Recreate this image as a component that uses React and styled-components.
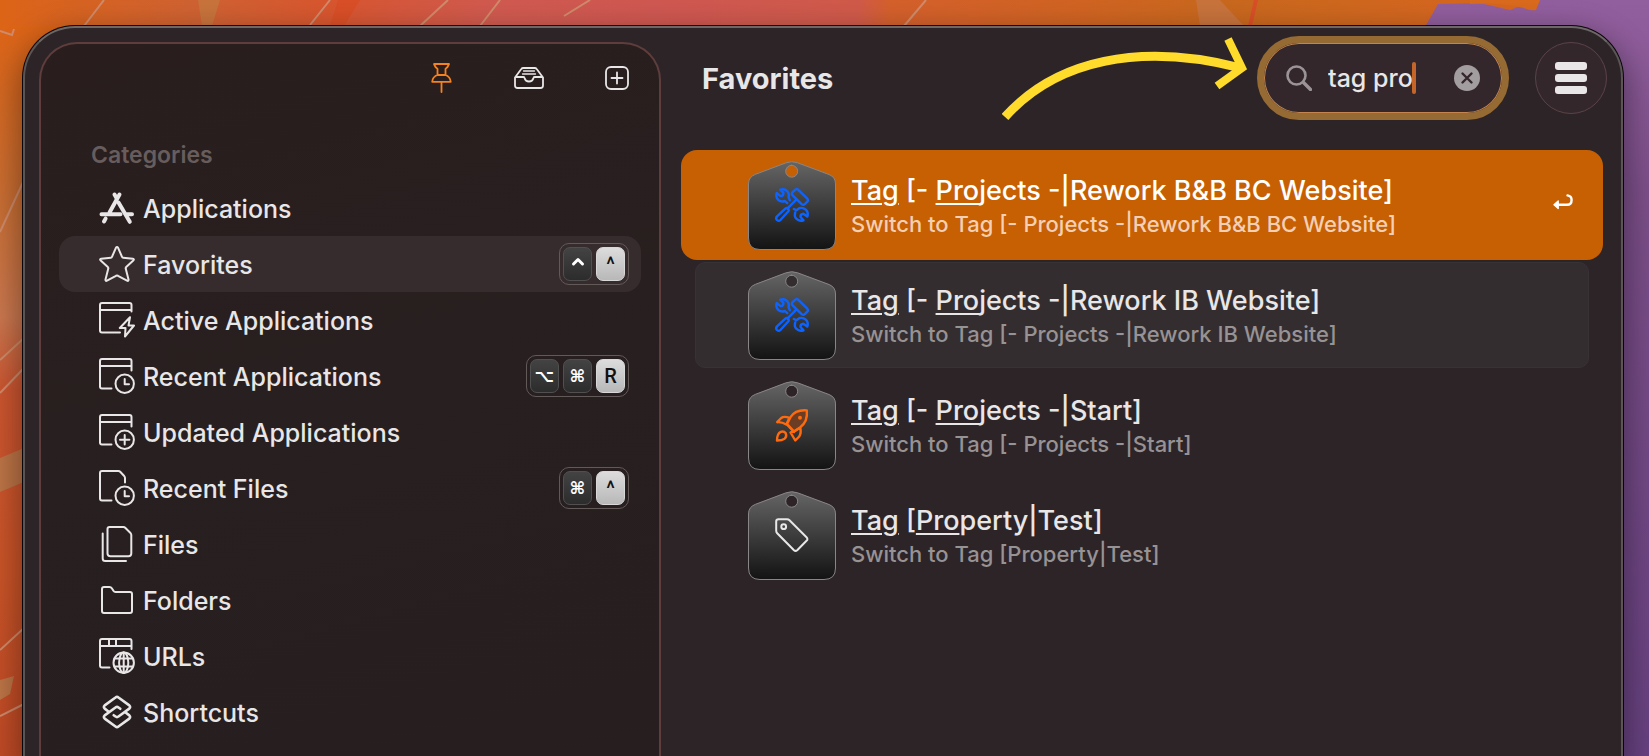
import React from "react";
import styled, { createGlobalStyle, css } from "styled-components";

const GlobalStyle = createGlobalStyle`
  *, *::before, *::after {
    box-sizing: border-box;
  }
  body {
    margin: 0;
    background: #2d2428;
    color: #e8e6e7;
    font-family: Inter, "Liberation Sans", sans-serif;
    font-size: 26px;
    font-weight: 500;
  }
  button, input {
    margin: 0;
    padding: 0;
    border: 0;
    background: none;
    color: inherit;
    font: inherit;
  }
`;

const Desktop = styled.div`
  position: relative;
  min-height: 100vh;
  padding: 26px 26px 0 23px;
  overflow: hidden;
`;

const WallpaperSvg = styled.svg`
  position: absolute;
  inset: 0;
  width: 100%;
  height: 100%;
`;

const AppWindow = styled.div`
  position: relative;
  display: flex;
  min-height: calc(100vh - 26px);
  border: 2px solid #5b5556;
  border-top-color: #6d6768;
  border-bottom: 0;
  border-radius: 52px 52px 0 0;
  background: #2d2428;
  box-shadow: 0 0 0 1px #080606, 0 12px 30px 6px rgba(0, 0, 0, 0.35);
`;

const Sidebar = styled.aside`
  flex: 0 0 622px;
  margin: 14px 0 0 14px;
  padding: 0 18px;
  border: 2px solid #5f3d3c;
  border-bottom: 0;
  border-radius: 38px 38px 0 0;
  background: linear-gradient(165deg, #291e1d 0%, #281f20 45%, #261e1f 100%);
`;

const Toolbar = styled.div`
  display: flex;
  align-items: center;
  justify-content: flex-end;
  gap: 56px;
  height: 68px;
  padding-right: 8px;
`;

const ToolButton = styled.button`
  display: flex;
  align-items: center;
  justify-content: center;
  width: 32px;
  height: 32px;
  color: ${(props) => (props.$active ? "#f58220" : "#e8e6e7")};
`;

const SectionTitle = styled.h2`
  margin: 28px 0 10px 32px;
  color: #675d5d;
  font-size: 23px;
  font-weight: 600;
  line-height: 30px;
`;

const CategoryList = styled.ul`
  margin: 0;
  padding: 0;
  list-style: none;
`;

const CategoryRow = styled.button`
  display: flex;
  align-items: center;
  gap: 8px;
  width: 100%;
  height: 56px;
  padding: 0 12px 0 40px;
  border-radius: 16px;
  background: ${(props) => (props.$selected ? "#372c2d" : "transparent")};
  font-size: 25px;
  text-align: left;
`;

const CategoryName = styled.span`
  flex: 1;
  padding-top: 2px;
`;

const Shortcut = styled.span`
  display: flex;
  gap: 4px;
  padding: 3px;
  border: 1px solid #625959;
  border-radius: 10px;
`;

const Key = styled.kbd`
  display: flex;
  align-items: center;
  justify-content: center;
  width: 29px;
  height: 34px;
  border: 1px solid #505050;
  border-radius: 7px;
  background: linear-gradient(#434343, #2c2c2c);
  color: #ffffff;
  font-family: "DejaVu Sans", sans-serif;
  font-size: 17px;
  font-weight: 700;
  ${(props) =>
    props.$light &&
    css`
      border-color: #d8d8d8;
      background: linear-gradient(#dcdcdc, #b8b8b8);
      color: #111111;
      font-family: Roboto, sans-serif;
      font-size: 20px;
      font-weight: 500;
    `}
`;

const Main = styled.main`
  flex: 1;
  min-width: 0;
  padding: 8px 14px 0 20px;
`;

const Header = styled.header`
  display: flex;
  align-items: center;
  height: 84px;
  padding-left: 21px;
`;

const Title = styled.h1`
  margin: 0 auto 0 0;
  font-size: 29px;
  font-weight: 700;
`;

const Arrow = styled.svg`
  flex: none;
  margin-right: 7px;
`;

const SearchBox = styled.label`
  display: flex;
  align-items: center;
  width: 252px;
  height: 84px;
  padding: 0 22px;
  border: 7px solid #966a33;
  border-radius: 42px;
  background: #33272b;
  box-shadow: inset 0 0 0 1px #c4844e;
`;

const SearchInput = styled.input`
  width: 84px;
  margin-left: 16px;
  outline: none;
  font-size: 25px;
  caret-color: transparent;
`;

const Caret = styled.span`
  width: 4px;
  height: 32px;
  border-radius: 2px;
  background: #c4662a;
`;

const ClearButton = styled.button`
  width: 26px;
  height: 26px;
  margin-left: auto;
  border-radius: 50%;
  background: #a29d9f;
  color: #33272b;
`;

const MenuButton = styled.button`
  display: flex;
  flex-direction: column;
  align-items: center;
  justify-content: center;
  gap: 4px;
  width: 72px;
  height: 72px;
  margin-left: 26px;
  border: 1px solid #5b4348;
  border-radius: 50%;
  background: #33272b;
`;

const MenuBar = styled.span`
  width: 32px;
  height: 8px;
  border-radius: 3px;
  background: #e8e6e7;
`;

const Results = styled.ul`
  margin: 30px 4px 0 0;
  padding: 0;
  list-style: none;
`;

const ResultRow = styled.button`
  display: flex;
  align-items: center;
  gap: 15px;
  width: 100%;
  height: 110px;
  padding: 0 30px 0 67px;
  border-radius: 16px;
  text-align: left;
  ${(props) =>
    props.$selected &&
    css`
      background: #c75f03;
      color: #ffffff;
    `}
  ${(props) =>
    props.$hovered &&
    css`
      width: calc(100% - 28px);
      height: 106px;
      margin: 2px 14px;
      padding: 0 16px 0 52px;
      border: 1px solid #383234;
      border-radius: 10px;
      background: #342d2f;
    `}
`;

const ResultText = styled.span`
  display: flex;
  flex: 1;
  flex-direction: column;
  padding-top: 1px;
`;

const ResultTitle = styled.span`
  font-size: 27px;
  line-height: 36px;
`;

const ResultDetail = styled.span`
  color: ${(props) => (props.$selected ? "#f3cfb4" : "#979294")};
  font-size: 22px;
  line-height: 30px;
`;

const Match = styled.span`
  text-decoration: underline;
  text-decoration-thickness: 2px;
  text-underline-offset: 3px;
`;

const EnterHint = styled.span`
  display: flex;
  padding-bottom: 6px;
`;

const Stroke = ({ width = 36, height = 36, weight = 2, children, ...rest }) => (
  <svg
    width={width}
    height={height}
    viewBox={`0 0 ${width} ${height}`}
    fill="none"
    stroke="currentColor"
    strokeWidth={weight}
    strokeLinecap="round"
    strokeLinejoin="round"
    aria-hidden="true"
    {...rest}
  >
    {children}
  </svg>
);

const ClockBadge = () => (
  <>
    <circle cx="25.7" cy="25.7" r="9.2" />
    <path d="M25.7 21V26.2H30" />
  </>
);

const icons = {
  applications: (
    <g strokeWidth="4">
      <path d="M20.5 4.5L10.5 22.5M6.6 28.6L5 31.5M2.5 24.3H21.5M28 24.3H33" />
      <path d="M15.5 4.5L17.5 8M19.5 12.5L30.8 31.8" />
    </g>
  ),
  star: (
    <path d="M16.9 1.8Q18 0.2 19.1 1.8L23 10.8Q23.3 11.7 24.2 11.8L33.8 12.8Q35.7 13.2 34.3 14.6L27.2 21Q26.5 21.7 26.7 22.6L29.5 33.4Q29.7 35.4 28 34.7L19 29.8Q18 29.4 17 29.8L8 34.7Q6.3 35.4 6.5 33.4L9.3 22.6Q9.5 21.7 8.8 21L1.7 14.6Q0.3 13.2 2.2 12.8L11.8 11.8Q12.7 11.7 13 10.8Z" />
  ),
  active: (
    <>
      <path d="M32.5 9.5V3Q32.5 1 30.5 1H3Q1 1 1 3V28.5Q1 30.5 3 30.5H21M1 8H32.5" />
      <path d="M31 15.2L20.8 26H26.5L26 34.5L35 23.5H29.5Z" />
    </>
  ),
  recent: (
    <>
      <path d="M32.5 12.5V3Q32.5 1 30.5 1H3Q1 1 1 3V28.5Q1 30.5 3 30.5H12.5M1 8H32.5" />
      <ClockBadge />
    </>
  ),
  updated: (
    <>
      <path d="M32.5 12.5V3Q32.5 1 30.5 1H3Q1 1 1 3V28.5Q1 30.5 3 30.5H12.5M1 8H32.5" />
      <circle cx="25.7" cy="25.7" r="9.2" />
      <path d="M25.7 21V30.4M21 25.7H30.4" />
    </>
  ),
  recentFiles: (
    <>
      <path d="M12.5 30.5H3Q1 30.5 1 28.5V3Q1 1 3 1H19.5Q20.5 1 21.2 1.7L25.2 6Q26 7 26 8V12.5" />
      <ClockBadge />
    </>
  ),
  files: (
    <>
      <path d="M10.5 1H24.5Q25.5 1 26.2 1.7L31.5 7Q32.3 8 32.3 9V27.5Q32.3 30.2 29.5 30.2H11.5Q8.5 30.2 8.5 27.5V3Q8.5 1 10.5 1Z" />
      <path d="M3.7 7.5V32.5Q3.7 35 6.2 35H27" />
    </>
  ),
  folder: (
    <path d="M5 5H10.5Q12 5 12.8 6.2L14.6 9Q15.2 10 16.5 10H31Q33 10 33 12V29Q33 31 31 31H5Q3 31 3 29V7Q3 5 5 5Z" />
  ),
  urls: (
    <>
      <path d="M32.5 11V3Q32.5 1 30.5 1H3Q1 1 1 3V27.5Q1 29.5 3 29.5H10.5M1 8H32.5M10 1V8M17 1V8" />
      <circle cx="24.7" cy="24.7" r="10.2" />
      <ellipse cx="24.7" cy="24.7" rx="4.6" ry="10.2" />
      <path d="M24.7 14.5V34.9M15.6 20.5H33.8M15.6 28.5H33.8" />
    </>
  ),
  shortcuts: (
    <g strokeWidth="2.6">
      <path d="M14.7 21.2L16.5 22.5Q18 23.6 19.5 22.5L30.3 14.6Q32 13 30.3 11.4L19.5 3.5Q18 2.3 16.5 3.5L5.7 11.4Q4 13 5.7 14.6L9.7 17.7" />
      <path d="M21.3 14.8L19.5 13.5Q18 12.4 16.5 13.5L5.7 21.4Q4 23 5.7 24.6L16.5 32.5Q18 33.7 19.5 32.5L30.3 24.6Q32 23 30.3 21.4L26.3 18.3" />
    </g>
  ),
};

const glyphs = {
  tools: (
    <g transform="translate(27 27)" stroke="#0d63ff" strokeWidth="2.4">
      <path d="M17.6 7.3Q16 5.7 17.6 4.2L20.3 1.7Q21.8 0.4 23.3 1.8L32.3 10.7Q33.7 12.2 32.3 13.6L29.8 16.1Q28.2 17.4 26.7 16.1ZM21.3 11.7L12.3 20.7M10.3 20.7Q11.8 19.4 13 20.6Q14.4 22 13.2 23.5L5.6 31.8Q3.5 33.6 1.9 32Q0.3 30.3 2 28.4Z" />
      <path d="M5.2 1.7L8.4 4.8Q8.6 8 5.6 8.1L1.7 5Q0.3 9.2 3.4 12Q6.3 14.3 10 13L12.3 15.2M5.2 1.7Q9.6 0.2 12.4 3.3Q14.7 6 13.6 9.4L14.9 12.3" />
      <path d="M28.5 32.3L25.5 29Q25.3 26 28.4 25.7L32.3 28.6Q33.7 24.6 30.8 21.7Q28 19.1 24.3 20.2L21.3 22.3L18.8 21M28.5 32.3Q24.3 33.8 21.3 30.7Q19 28.2 20.2 24.5" />
    </g>
  ),
  rocket: (
    <g transform="translate(28 28)" stroke="#ff6a0d" strokeWidth="2.4">
      <path
        d="M11 15L14.5 8.2Q19.5 0.5 30.8 1.4Q32 12.5 24.3 18.3L18 22.5Z"
        fill="#6b3d25"
      />
      <path d="M13.5 8.8Q8 6.8 5.2 9L1.2 13.2Q6 12.8 10.3 15.5ZM24.3 18.8Q25.5 24 23.2 27.5L19.3 31.5L14.5 23.5L18 22.5ZM10.5 15L18 23" />
      <path d="M1 31.5Q1 24.5 4.8 22.8Q7.8 21.8 9.8 24.3Q11 27.5 8.6 29.7Q6 31.5 1 31.5Z" />
      <circle cx="24" cy="8.7" r="2" fill="#ff6a0d" stroke="none" />
    </g>
  ),
  tag: (
    <g transform="translate(27 27)" stroke="#e8e8e8" strokeWidth="2">
      <path d="M1.2 3.5Q1.2 1.2 3.5 1.2H12Q13.5 1.2 14.5 2.2L31.5 19.3Q33.3 21.2 31.5 22.8L22.2 32.2Q20.5 33.6 19 32.2L2.2 15.2Q1.2 14.2 1.2 12.8Z" />
      <circle cx="8.7" cy="8.7" r="2.4" />
    </g>
  ),
};

const TagBadge = ({ glyph }) => (
  <Stroke width={88} height={89} weight={1}>
    <defs>
      <linearGradient id="badge" x1="0" y1="0" x2="0" y2="1">
        <stop offset="0" stopColor="#656565" />
        <stop offset="1" stopColor="#131313" />
      </linearGradient>
    </defs>
    <path
      d="M38 1.8Q43.8 -0.5 49.6 1.8L81 13.5Q87.5 16 87.5 23V77Q87.5 88.5 76 88.5H12Q0.5 88.5 0.5 77V23Q0.5 16 7 13.5ZM43.7 4.2A6 6 0 1 0 43.7 16.2A6 6 0 1 0 43.7 4.2Z"
      fill="url(#badge)"
      fillRule="evenodd"
      stroke="#8a8686"
    />
    {glyphs[glyph]}
  </Stroke>
);

const ControlGlyph = () => (
  <Stroke width={14} height={16} weight={3}>
    <path d="M2.500 8L7 3.500L11.500 8" />
  </Stroke>
);

const Wallpaper = () => (
  <WallpaperSvg viewBox="0 0 1649 756" preserveAspectRatio="none" aria-hidden="true">
    <defs>
      <linearGradient id="sky">
        <stop offset="0" stopColor="#dc6417" />
        <stop offset="0.12" stopColor="#cf6233" />
        <stop offset="0.2" stopColor="#d8562f" />
        <stop offset="0.3" stopColor="#d05a50" />
        <stop offset="0.4" stopColor="#cf5852" />
        <stop offset="0.52" stopColor="#d05a4a" />
        <stop offset="0.54" stopColor="#d4602c" />
        <stop offset="0.66" stopColor="#d06422" />
        <stop offset="0.74" stopColor="#c8681e" />
        <stop offset="0.9" stopColor="#d66620" />
      </linearGradient>
      <linearGradient id="edge" x1="0" y1="0" x2="0" y2="1">
        <stop offset="0" stopColor="#dc6417" />
        <stop offset="0.25" stopColor="#c96f35" />
        <stop offset="0.4" stopColor="#cb7850" />
        <stop offset="0.5" stopColor="#cc5530" />
        <stop offset="0.75" stopColor="#ca5428" />
        <stop offset="1" stopColor="#c04a26" />
      </linearGradient>
      <linearGradient id="dusk" x1="0" y1="0" x2="0" y2="1">
        <stop offset="0" stopColor="#925f9e" />
        <stop offset="0.25" stopColor="#7d4f8a" />
        <stop offset="1" stopColor="#674180" />
      </linearGradient>
    </defs>
    <rect width="1649" height="756" fill="url(#sky)" />
    <rect y="25" width="60" height="731" fill="url(#edge)" />
    <path d="M1422 32L1438 4L1480 3L1510 10L1535 0H1649V756H1590V60Z" fill="url(#dusk)" />
    <path d="M1470 0H1540L1536 10Q1530 11 1524 8Q1500 2 1470 4Z" fill="#d96a1e" />
    <g fill="none" stroke="#cf8b6b" strokeWidth="2">
      <path d="M84 26L104 0M0 31L12 35L14 29M310 25L330 0M420 26L448 0M480 26L500 0M564 16L590 0M904 26L926 0" />
      <path d="M0 360L24 338M0 393L24 368M0 650L24 628M0 716L24 704M0 232L24 180" />
    </g>
    <path d="M198 0H220L212 26H202ZM1196 0H1220L1244 26H1200Z" fill="#c8733c" />
    <path d="M338 0H360L344 26H330ZM1254 0H1258L1252 26H1248Z" fill="#d94f27" />
    <path d="M0 458L24 448V482L0 492ZM0 680L14 676L10 694L0 700Z" fill="#bd7446" />
  </WallpaperSvg>
);

const categories = [
  { name: "Applications", icon: "applications" },
  { name: "Favorites", icon: "star", keys: ["control", "^"] },
  { name: "Active Applications", icon: "active" },
  { name: "Recent Applications", icon: "recent", keys: ["⌥", "⌘", "R"] },
  { name: "Updated Applications", icon: "updated" },
  { name: "Recent Files", icon: "recentFiles", keys: ["⌘", "^"] },
  { name: "Files", icon: "files" },
  { name: "Folders", icon: "folder" },
  { name: "URLs", icon: "urls" },
  { name: "Shortcuts", icon: "shortcuts" },
];

const results = [
  { before: " [- ", rest: "jects -|Rework B&B BC Website]", glyph: "tools" },
  { before: " [- ", rest: "jects -|Rework IB Website]", glyph: "tools" },
  { before: " [- ", rest: "jects -|Start]", glyph: "rocket" },
  { before: " [", rest: "perty|Test]", glyph: "tag" },
];

const App = () => {
  return (
    <Desktop>
      <GlobalStyle />
      <Wallpaper />
      <AppWindow>
        <Sidebar>
          <Toolbar>
            <ToolButton $active aria-label="Pin window">
              <Stroke width={21} height={30} weight={1.8}>
                <path d="M3 1H18L16.5 4L14.5 5.8V11.8Q19.3 14 19.7 18.8H1.2Q1.5 14 6.5 11.8V5.8L4.5 4ZM6.5 12H14.5M10.5 19V29" />
              </Stroke>
            </ToolButton>
            <ToolButton aria-label="Collections">
              <Stroke width={30} height={22} weight={1.8}>
                <path d="M1 10.5L7.3 2Q8 1 9.3 1H20.7Q22 1 22.7 2L29 10.5V18.5Q29 21 26.5 21H3.5Q1 21 1 18.5ZM1.5 10H9.5Q10.5 10 10.7 11.5Q11.5 14.5 15 14.5Q18.5 14.5 19.3 11.5Q19.5 10 20.5 10H28.5" />
                <path d="M9.5 4H20.5M8.5 7H21.5" strokeWidth="1.3" />
              </Stroke>
            </ToolButton>
            <ToolButton aria-label="Add">
              <Stroke width={24} height={24} weight={1.8}>
                <rect x="1" y="1" width="22" height="22" rx="5" />
                <path d="M12 6.5V17.5M6.5 12H17.5" />
              </Stroke>
            </ToolButton>
          </Toolbar>
          <SectionTitle>Categories</SectionTitle>
          <CategoryList>
            {categories.map(({ name, icon, keys }) => (
              <li key={name}>
                <CategoryRow $selected={name === "Favorites"}>
                  <Stroke>{icons[icon]}</Stroke>
                  <CategoryName>{name}</CategoryName>
                  {keys && (
                    <Shortcut>
                      {keys.map((key, i) => (
                        <Key key={key} $light={i === keys.length - 1}>
                          {key === "control" ? <ControlGlyph /> : key}
                        </Key>
                      ))}
                    </Shortcut>
                  )}
                </CategoryRow>
              </li>
            ))}
          </CategoryList>
        </Sidebar>
        <Main>
          <Header>
            <Title>Favorites</Title>
            <Arrow
              width="248"
              height="84"
              viewBox="0 0 248 84"
              fill="none"
              stroke="#ffdb2c"
              strokeWidth="9"
              aria-hidden="true"
            >
              <path d="M3 81C54 24 138 6 239 32" />
              <path d="M226 3L240 32L215 50" strokeWidth="8" />
            </Arrow>
            <SearchBox>
              <Stroke width={26} height={26} weight={2.6} color="#9a9496">
                <circle cx="10.5" cy="10.5" r="9" />
                <path d="M17.5 17.5L24.5 24.5" strokeWidth="3.4" />
              </Stroke>
              <SearchInput type="text" aria-label="Search" defaultValue="tag pro" />
              <Caret />
              <ClearButton aria-label="Clear search">
                <Stroke width={26} height={26} weight={2.4}>
                  <path d="M8.5 8.5L17.5 17.5M17.5 8.5L8.5 17.5" />
                </Stroke>
              </ClearButton>
            </SearchBox>
            <MenuButton aria-label="Menu">
              <MenuBar />
              <MenuBar />
              <MenuBar />
            </MenuButton>
          </Header>
          <Results>
            {results.map(({ before, rest, glyph }, i) => (
              <li key={rest}>
                <ResultRow $selected={i === 0} $hovered={i === 1}>
                  <TagBadge glyph={glyph} />
                  <ResultText>
                    <ResultTitle>
                      <Match>Tag</Match>
                      {before}
                      <Match>Pro</Match>
                      {rest}
                    </ResultTitle>
                    <ResultDetail $selected={i === 0}>
                      {`Switch to Tag${before}Pro${rest}`}
                    </ResultDetail>
                  </ResultText>
                  {i === 0 && (
                    <EnterHint>
                      <Stroke width={20} height={17} weight={2.4}>
                        <path d="M14.5 1.4Q18.6 2 18.6 6Q18.6 10.8 14 10.8H5" />
                        <path d="M1 10.8L5.2 7V14.6Z" fill="currentColor" strokeWidth="1.4" />
                      </Stroke>
                    </EnterHint>
                  )}
                </ResultRow>
              </li>
            ))}
          </Results>
        </Main>
      </AppWindow>
    </Desktop>
  );
};

export default App;
